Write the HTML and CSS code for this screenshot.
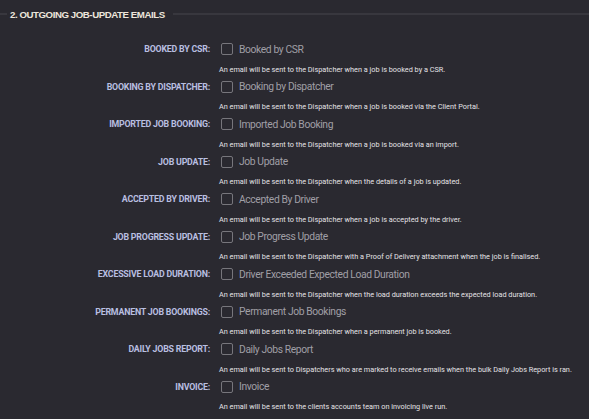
FILE: index.html
```html
<!DOCTYPE html>
<html>
<head>
    <title>Email Settings</title>
    <link rel="stylesheet" href="styles.css">
</head>
<body>
    <section class="panel">
        <h2 class="panel-title"><span>2. OUTGOING JOB-UPDATE EMAILS</span></h2>

        <div class="settings">
            <div class="setting">
                <span class="setting-name">BOOKED BY CSR:</span>
                <label class="check"><span class="box"></span>Booked by CSR</label>
                <p class="hint">An email will be sent to the Dispatcher when a job is booked by a CSR.</p>
            </div>
            <div class="setting">
                <span class="setting-name">BOOKING BY DISPATCHER:</span>
                <label class="check"><span class="box"></span>Booking by Dispatcher</label>
                <p class="hint">An email will be sent to the Dispatcher when a job is booked via the Client Portal.</p>
            </div>
            <div class="setting">
                <span class="setting-name">IMPORTED JOB BOOKING:</span>
                <label class="check"><span class="box"></span>Imported Job Booking</label>
                <p class="hint">An email will be sent to the Dispatcher when a job is booked via an import.</p>
            </div>
            <div class="setting">
                <span class="setting-name">JOB UPDATE:</span>
                <label class="check"><span class="box"></span>Job Update</label>
                <p class="hint">An email will be sent to the Dispatcher when the details of a job is updated.</p>
            </div>
            <div class="setting">
                <span class="setting-name">ACCEPTED BY DRIVER:</span>
                <label class="check"><span class="box"></span>Accepted By Driver</label>
                <p class="hint">An email will be sent to the Dispatcher when a job is accepted by the driver.</p>
            </div>
            <div class="setting">
                <span class="setting-name">JOB PROGRESS UPDATE:</span>
                <label class="check"><span class="box"></span>Job Progress Update</label>
                <p class="hint">An email will be sent to the Dispatcher with a Proof of Delivery attachment when the job is finalised.</p>
            </div>
            <div class="setting">
                <span class="setting-name">EXCESSIVE LOAD DURATION:</span>
                <label class="check"><span class="box"></span>Driver Exceeded Expected Load Duration</label>
                <p class="hint">An email will be sent to the Dispatcher when the load duration exceeds the expected load duration.</p>
            </div>
            <div class="setting">
                <span class="setting-name">PERMANENT JOB BOOKINGS:</span>
                <label class="check"><span class="box"></span>Permanent Job Bookings</label>
                <p class="hint">An email will be sent to the Dispatcher when a permanent job is booked.</p>
            </div>
            <div class="setting">
                <span class="setting-name">DAILY JOBS REPORT:</span>
                <label class="check"><span class="box"></span>Daily Jobs Report</label>
                <p class="hint">An email will be sent to Dispatchers who are marked to receive emails when the bulk Daily Jobs Report is ran.</p>
            </div>
            <div class="setting">
                <span class="setting-name">INVOICE:</span>
                <label class="check"><span class="box"></span>Invoice</label>
                <p class="hint">An email will be sent to the clients accounts team on invoicing live run.</p>
            </div>
        </div>
    </section>
</body>
</html>
```

FILE: styles.css
```css
body {
    margin: 0;
    padding: 0;
    background-color: #2a2930;
    font-family: Roboto, "Liberation Sans", sans-serif;
}

.panel {
    padding-top: 8px;
}

.panel-title {
    display: flex;
    align-items: center;
    margin: 0;
    font-family: "Liberation Sans", Arial, sans-serif;
    font-size: 9.7px;
    font-weight: bold;
    letter-spacing: -0.45px;
    color: #ede6dc;
    height: 12px;
}

.panel-title::before {
    content: "";
    width: 7px;
    height: 2px;
    background-color: #38373e;
    margin-right: 3px;
}

.panel-title::after {
    content: "";
    flex: 1;
    height: 2px;
    background-color: #38373e;
    margin-left: 8px;
}

.settings {
    padding-top: 20px;
}

.setting {
    display: grid;
    grid-template-columns: 210px 1fr;
    column-gap: 11px;
    height: 37.5px;
}

.setting-name {
    text-align: right;
    font-size: 8.8px;
    font-weight: bold;
    letter-spacing: -0.2px;
    color: #b9bfe0;
    line-height: 18px;
}

.check {
    display: flex;
    align-items: center;
    gap: 6px;
    font-size: 10.3px;
    letter-spacing: -0.38px;
    color: #a09fa6;
    height: 18px;
}

.box {
    width: 10px;
    height: 10px;
    border: 1px solid #77767c;
    border-radius: 2px;
}

.hint {
    grid-column: 2;
    margin: 3px 0 0 -2px;
    font-size: 7.3px;
    color: #e4e2e6;
}
```
